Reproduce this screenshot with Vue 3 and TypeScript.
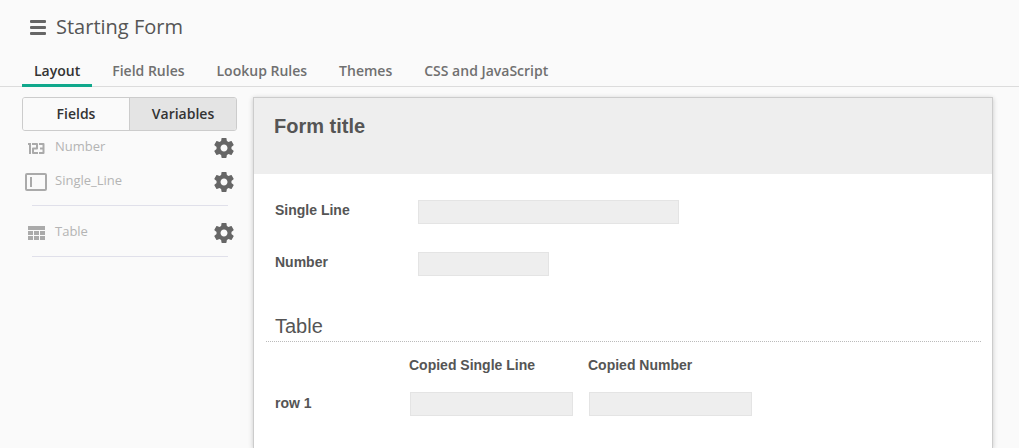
<script setup lang="ts">
import { ref } from 'vue'

type FieldKind = 'number' | 'line' | 'table'

interface Field {
  name: string
  kind: FieldKind
}

const tabs: string[] = ['Layout', 'Field Rules', 'Lookup Rules', 'Themes', 'CSS and JavaScript']
const activeTab = ref('Layout')

const panels: string[] = ['Fields', 'Variables']
const activePanel = ref('Fields')

const groups: Field[][] = [
  [
    { name: 'Number', kind: 'number' },
    { name: 'Single_Line', kind: 'line' },
  ],
  [{ name: 'Table', kind: 'table' }],
]

const singleLine = ref('')
const numberValue = ref('')

const columns: string[] = ['Copied Single Line', 'Copied Number']
const rows = ref([{ label: 'row 1', cells: ['', ''] }])
</script>

<template>
  <div class="page">
    <header class="top">
      <div class="title-bar">
        <button class="icon-button" type="button" aria-label="Menu">
          <svg width="16" height="16" viewBox="0 0 16 16" fill="#666">
            <rect x="0" y="1" width="16" height="3" rx="1" />
            <rect x="0" y="7" width="16" height="3" rx="1" />
            <rect x="0" y="13" width="16" height="3" rx="1" />
          </svg>
        </button>
        <h1>Starting Form</h1>
      </div>
      <nav class="tabs">
        <button
          v-for="tab in tabs"
          :key="tab"
          type="button"
          class="tab"
          :class="{ active: tab === activeTab }"
          @click="activeTab = tab"
        >{{ tab }}</button>
      </nav>
    </header>

    <div class="workspace">
      <aside class="sidebar">
        <div class="switch">
          <button
            v-for="panel in panels"
            :key="panel"
            type="button"
            :class="{ active: panel === activePanel }"
            @click="activePanel = panel"
          >{{ panel }}</button>
        </div>
        <ul v-for="(group, index) in groups" :key="index" class="group">
          <li v-for="field in group" :key="field.name" class="field">
            <span class="kind">
              <svg v-if="field.kind === 'number'" width="18" height="12" viewBox="0 0 18 12" fill="none" stroke="#aaa" stroke-width="2">
                <path d="M1 2H3V12" />
                <path d="M5 2H10V6.500H6V11H11" stroke-linejoin="round" />
                <path d="M12 2H16.500V11H12M13 6.500H16.500" stroke-linejoin="round" />
              </svg>
              <svg v-else-if="field.kind === 'line'" width="22" height="18" viewBox="0 0 22 18" fill="none" stroke="#aaa" stroke-width="2">
                <rect x="1" y="1" width="20" height="16" rx="1" />
                <path d="M6 4V14" />
              </svg>
              <svg v-else width="17" height="14" viewBox="0 0 17 14" fill="#aaa">
                <path d="M0 0H17V4H0ZM0 5H5V9H0ZM6 5H11V9H6ZM12 5H17V9H12ZM0 10H5V14H0ZM6 10H11V14H6ZM12 10H17V14H12Z" />
              </svg>
            </span>
            <span class="name">{{ field.name }}</span>
            <button class="icon-button" type="button" :aria-label="`${field.name} settings`">
              <svg width="20" height="20" viewBox="2 2 20 20" fill="#666">
                <path d="M19.43 12.98c.04-.32.07-.64.07-.98s-.03-.66-.07-.98l2.11-1.65c.19-.15.24-.42.12-.64l-2-3.46c-.12-.22-.39-.3-.61-.22l-2.49 1c-.52-.4-1.08-.73-1.69-.98l-.38-2.65C14.46 2.18 14.25 2 14 2h-4c-.25 0-.46.18-.49.42l-.38 2.65c-.61.25-1.17.59-1.69.98l-2.49-1c-.23-.09-.49 0-.61.22l-2 3.46c-.13.22-.07.49.12.64l2.11 1.65c-.04.32-.07.65-.07.98s.03.66.07.98l-2.11 1.65c-.19.15-.24.42-.12.64l2 3.46c.12.22.39.3.61.22l2.49-1c.52.4 1.08.73 1.69.98l.38 2.65c.03.24.24.42.49.42h4c.25 0 .46-.18.49-.42l.38-2.65c.61-.25 1.17-.59 1.69-.98l2.49 1c.23.09.49 0 .61-.22l2-3.46c.12-.22.07-.49-.12-.64l-2.11-1.65zM12 15.5c-1.93 0-3.5-1.57-3.5-3.5s1.57-3.5 3.5-3.5 3.5 1.57 3.5 3.5-1.57 3.5-3.5 3.5z" />
              </svg>
            </button>
          </li>
        </ul>
      </aside>

      <main class="form">
        <div class="form-head">
          <h2>Form title</h2>
        </div>
        <div class="form-body">
          <div class="form-row">
            <label for="single-line">Single Line</label>
            <input id="single-line" v-model="singleLine" class="wide" type="text" />
          </div>
          <div class="form-row">
            <label for="number">Number</label>
            <input id="number" v-model="numberValue" class="narrow" type="text" inputmode="numeric" />
          </div>
          <h3>Table</h3>
          <table>
            <thead>
              <tr>
                <td class="row-name"></td>
                <th v-for="column in columns" :key="column" scope="col">{{ column }}</th>
              </tr>
            </thead>
            <tbody>
              <tr v-for="row in rows" :key="row.label">
                <th class="row-name" scope="row">{{ row.label }}</th>
                <td v-for="(column, i) in columns" :key="column">
                  <input v-model="row.cells[i]" type="text" :aria-label="`${column}, ${row.label}`" />
                </td>
              </tr>
            </tbody>
          </table>
        </div>
      </main>
    </div>
  </div>
</template>

<style>
body {
  margin: 0;
  background: #fafafa;
}
</style>

<style scoped>
* {
  box-sizing: border-box;
}

.page {
  display: flex;
  flex-direction: column;
  min-height: 100vh;
  font-family: "Open Sans", "Noto Sans", sans-serif;
  color: #555;
}

button {
  font: inherit;
  cursor: pointer;
}

.icon-button {
  display: flex;
  padding: 0;
  border: 0;
  background: none;
}

.top {
  border-bottom: 1px solid #dcdcdc;
}

.title-bar {
  display: flex;
  align-items: center;
  gap: 10px;
  padding: 12px 30px 0;
}

h1 {
  margin: 0;
  font-size: 20px;
  line-height: 30px;
  font-weight: 400;
}

.tabs {
  display: flex;
  gap: 8px;
  margin: 14px 22px -1px;
}

.tab {
  padding: 4px 12px 3px;
  border: 0;
  border-bottom: 3px solid transparent;
  background: none;
  font-size: 14px;
  line-height: 21px;
  font-weight: 600;
  color: #707070;
}

.tab.active {
  border-bottom-color: #10a88c;
  color: #333;
}

.workspace {
  display: flex;
  flex: 1;
  gap: 16px;
  padding: 10px 26px 0 22px;
}

.sidebar {
  flex: none;
  width: 215px;
}

.switch {
  display: flex;
  border: 1px solid #ccc;
  border-radius: 3px;
  overflow: hidden;
}

.switch button {
  flex: 1;
  padding: 0;
  border: 0;
  background: #e4e4e4;
  font-size: 14px;
  line-height: 32px;
  font-weight: 600;
  color: #333;
}

.switch button + button {
  border-left: 1px solid #ccc;
}

.switch button.active {
  background: #fafafa;
}

.group {
  margin: 0;
  padding: 0;
  list-style: none;
}

.group::after {
  content: "";
  display: block;
  margin: 6px 9px 10px 10px;
  border-bottom: 1px solid #e0e0ea;
}

.field {
  display: flex;
  align-items: center;
  height: 34px;
  padding: 0 3px;
}

.kind {
  display: flex;
  justify-content: center;
  width: 22px;
}

.name {
  flex: 1;
  padding: 0 8px 4px;
  font-size: 13px;
  line-height: 18px;
  color: #b4b4b4;
}

.form {
  flex: 1;
  border: 1px solid #ccc;
  border-bottom: 0;
  background: #fff;
  box-shadow: 0 1px 5px rgba(0, 0, 0, 0.2);
  font-family: "Liberation Sans", Arial, sans-serif;
}

.form-head {
  height: 76px;
  padding: 16px 20px;
  background: #eee;
}

h2 {
  margin: 0;
  font-size: 20px;
  line-height: 24px;
  font-weight: 700;
}

.form-body {
  padding: 26px 11px 0 12px;
}

.form-row {
  display: flex;
  height: 52px;
  padding-left: 9px;
}

label {
  width: 143px;
  font-size: 14px;
  line-height: 20px;
  font-weight: 700;
}

input {
  height: 24px;
  padding: 0 6px;
  border: 1px solid #e4e4e4;
  background: #eee;
  font: inherit;
  font-size: 14px;
  color: #555;
}

.wide {
  width: 261px;
}

.narrow {
  width: 131px;
}

h3 {
  margin: 10px 0 12px;
  padding: 0 9px 3px;
  border-bottom: 1px dotted #bbb;
  font-size: 20px;
  line-height: 24px;
  font-weight: 400;
}

table {
  border-collapse: collapse;
}

th,
td {
  width: 179px;
  padding: 0;
  font-size: 14px;
  line-height: 22px;
  font-weight: 700;
  text-align: left;
  vertical-align: top;
}

thead th {
  padding-bottom: 16px;
}

.row-name {
  width: 143px;
  padding-left: 9px;
}

td input {
  display: block;
  width: 163px;
  margin-left: 1px;
}
</style>
